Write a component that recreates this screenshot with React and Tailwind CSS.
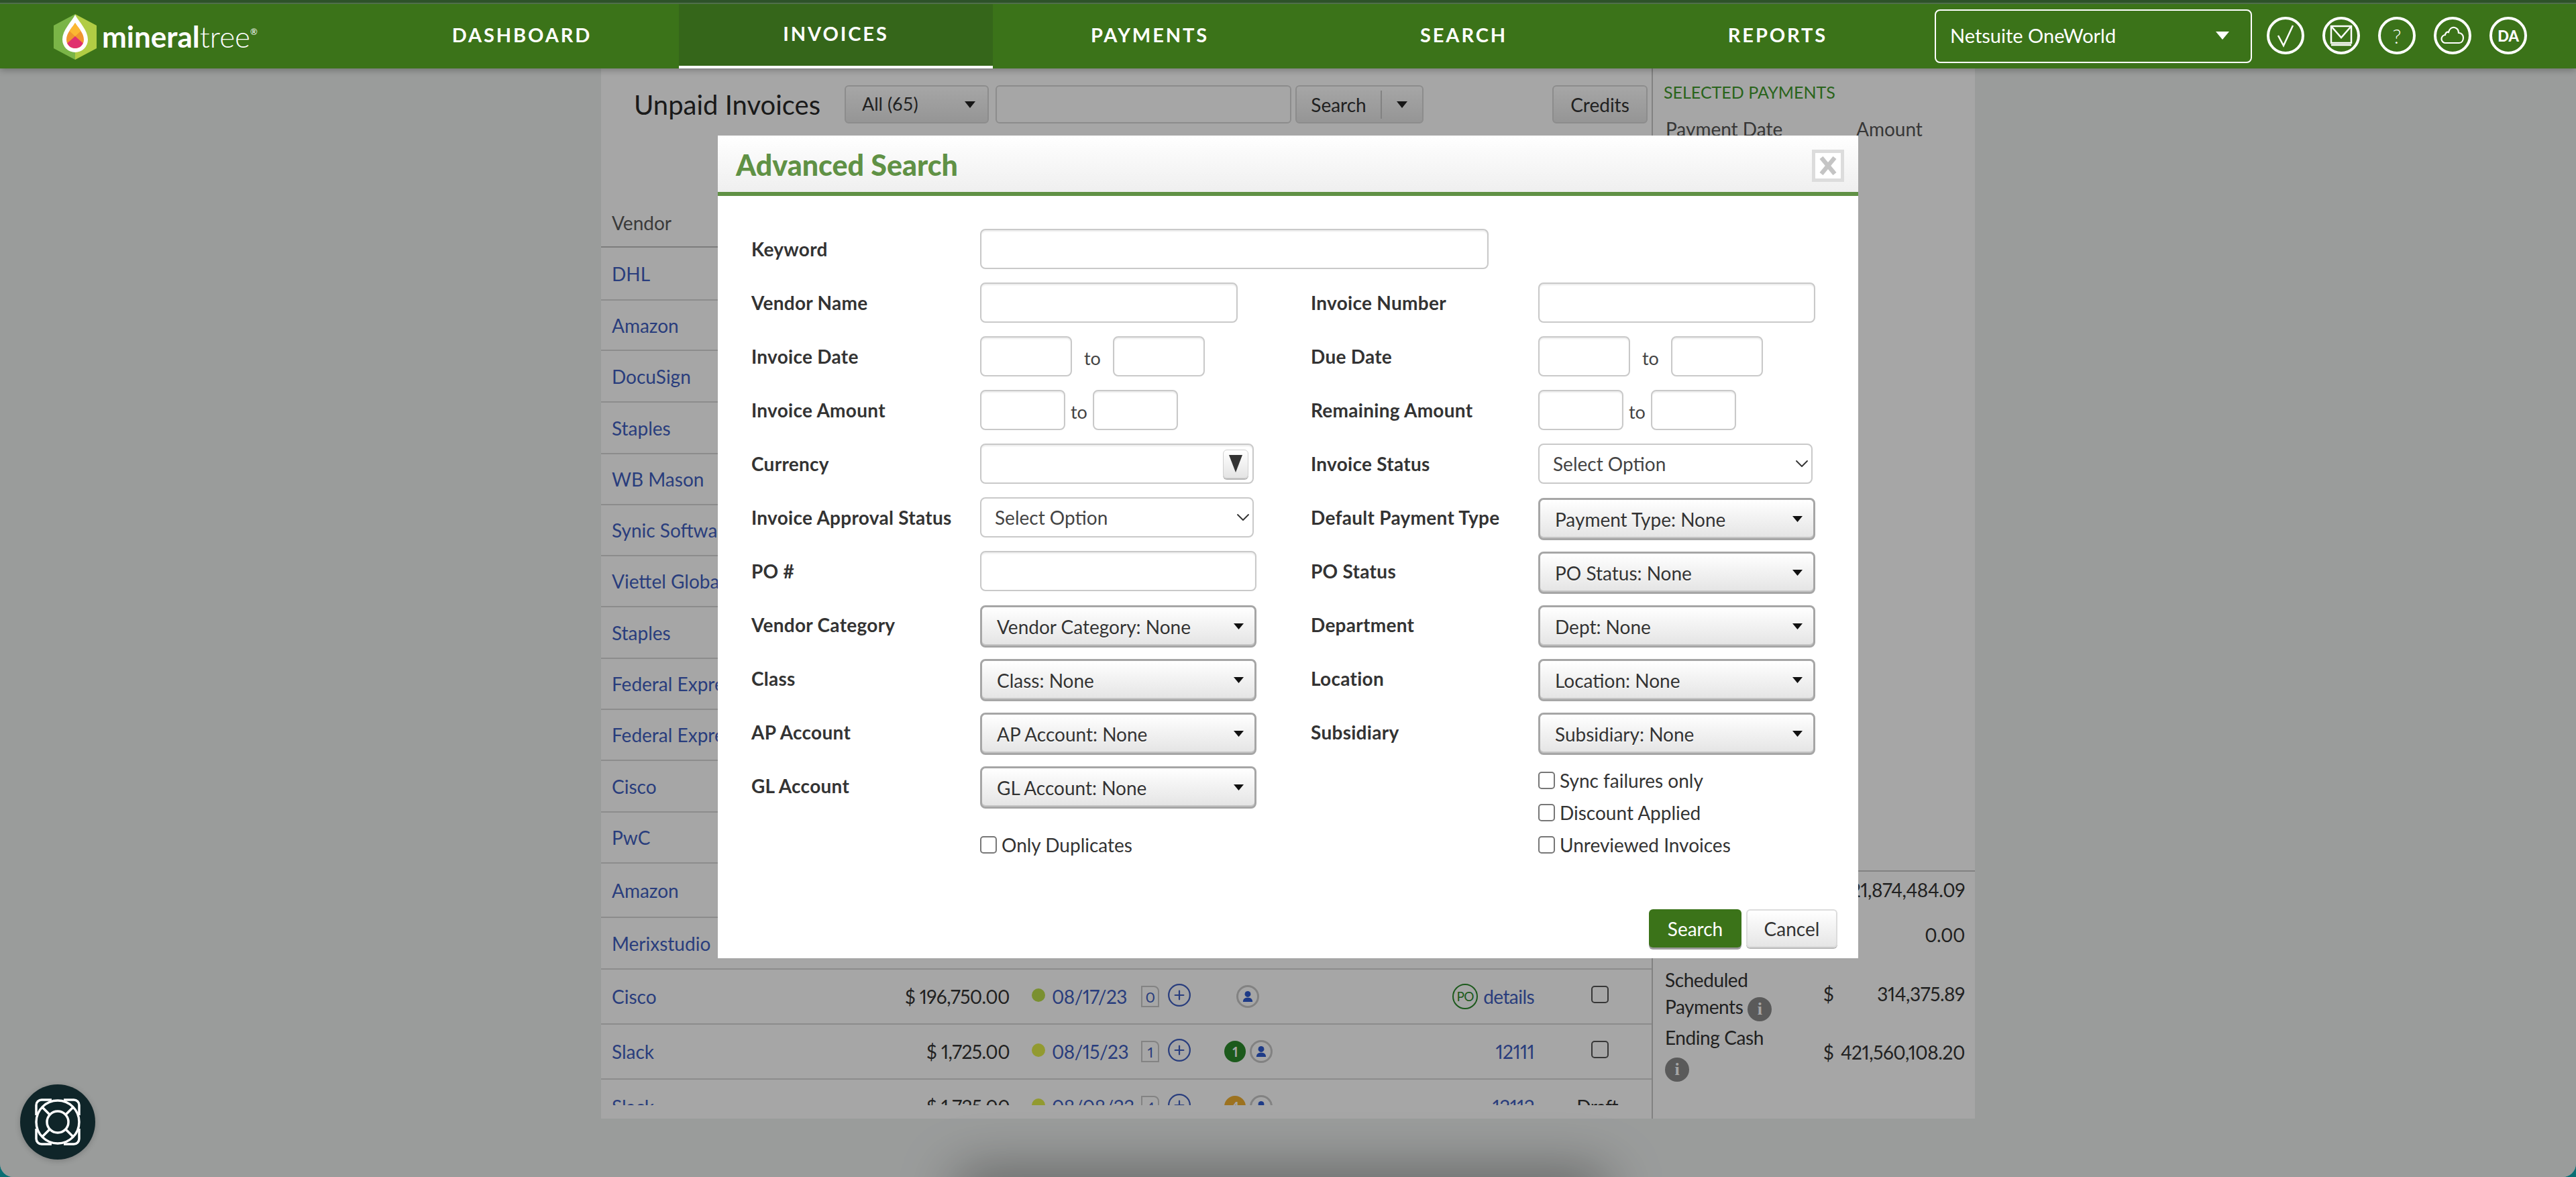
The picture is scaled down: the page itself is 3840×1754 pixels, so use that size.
import React from "react";
import { ChevronDown, CirclePlus } from "lucide-react";

const font = { fontFamily: '"Lato", "Open Sans", Arial, sans-serif' };

const vendors = [
  ["DHL", "h-[77px]"],
  ["Amazon", "h-[75px]"],
  ["DocuSign", "h-[77px]"],
  ["Staples", "h-[77px]"],
  ["WB Mason", "h-[76px]"],
  ["Synic Software", "h-[76px]"],
  ["Viettel Global", "h-[76px]"],
  ["Staples", "h-[77px]"],
  ["Federal Express", "h-[76px]"],
  ["Federal Express", "h-[76px]"],
  ["Cisco", "h-[77px]"],
  ["PwC", "h-[76px]"],
  ["Amazon", "h-[81px]"],
  ["Merixstudio", "h-[77px]"],
];

const detailRows = [
  { vendor: "Cisco", amount: "$ 196,750.00", dot: "bg-[#bcde4a]", date: "08/17/23", docs: 0, ref: "details", po: true, status: "check" },
  { vendor: "Slack", amount: "$ 1,725.00", dot: "bg-[#e1ed4a]", date: "08/15/23", docs: 1, badge: "1", badgeColor: "bg-[#2c8a2c]", ref: "12111", status: "check" },
  { vendor: "Slack", amount: "$ 1,725.00", dot: "bg-[#e1ed4a]", date: "08/08/23", docs: 4, badge: "4", badgeColor: "bg-[#f0b030]", ref: "12112", status: "Draft" },
];

function Logo() {
  return (
    <div className="flex items-center pl-[80px]">
      <svg width="64" height="68" viewBox="0 0 64 68" className="mt-[1px] shrink-0">
        <polygon points="32,0 0,17 0,51 32,68" fill="#7ab547" />
        <polygon points="32,0 64,17 64,51 32,68" fill="#b1cc44" />
        <path d="M32 1C38 12 51 24 51 38A19 19 0 0 1 13 38C13 24 26 12 32 1Z" fill="#fff" />
        <clipPath id="flame">
          <path d="M32 13C36 20 45 28 45 38A13 13 0 0 1 19 38C19 28 28 20 32 13Z" />
        </clipPath>
        <g clipPath="url(#flame)">
          <rect x="15" y="10" width="34" height="45" fill="#f0952f" />
          <polygon points="32,33 18,20 32,8 46,20" fill="#fbb832" />
          <polygon points="32,33 16,47 16,55 48,55 48,47" fill="#e0306e" />
        </g>
      </svg>
      <div className="ml-[8px] flex items-start text-white leading-none text-[44px]">
        <span className="font-bold">mineral</span>
        <span className="font-light">tree</span>
        <span className="text-[13px] mt-[9px]">®</span>
      </div>
    </div>
  );
}

function NavTab({ label, active }) {
  return (
    <div
      className={`flex-1 flex items-center justify-center pb-[4px] text-white font-bold text-[29px] tracking-[0.1em] ${
        active ? "bg-[#35661a] border-b-4 border-white" : ""
      }`}
    >
      {label}
    </div>
  );
}

function RoundIcon({ children }) {
  return (
    <div className="w-[56px] h-[56px] rounded-full border-[4px] border-white flex items-center justify-center text-white">
      {children}
    </div>
  );
}

function NavBar() {
  return (
    <div className="relative z-30 shadow-[0_2px_10px_rgba(0,0,0,0.3)]">
      <div className="h-[6px] bg-[#2d5229] border-b-2 border-[#4f6f4a]" />
      <div className="h-[96px] bg-[#3b7319] flex">
        <div className="w-[544px]">
          <div className="h-full flex items-center">
            <Logo />
          </div>
        </div>
        <div className="w-[2340px] flex">
          <NavTab label="DASHBOARD" />
          <NavTab label="INVOICES" active />
          <NavTab label="PAYMENTS" />
          <NavTab label="SEARCH" />
          <NavTab label="REPORTS" />
        </div>
        <div className="flex items-start pt-[8px]">
          <div className="w-[473px] h-[80px] border-2 border-white rounded-lg flex items-center justify-between pl-[21px] pr-[32px] pb-[2px] text-white text-[29px]">
            <span>Netsuite OneWorld</span>
            <svg width="20" height="12" viewBox="0 0 20 12">
              <polygon points="0,0 20,0 10,12" fill="#fff" />
            </svg>
          </div>
          <div className="flex gap-[27px] ml-[22px] mt-[11px]">
            <RoundIcon>
              <svg width="32" height="36" viewBox="0 0 32 36" fill="none" stroke="#fff" strokeWidth="2.5">
                <path d="M5 18l8 15L27 3" />
              </svg>
            </RoundIcon>
            <RoundIcon>
              <svg width="34" height="32" viewBox="0 0 34 32" fill="none" stroke="#fff" strokeWidth="2.5">
                <rect x="2" y="2" width="30" height="25" />
                <path d="M2 2l15 17L32 2M2 30h30" />
              </svg>
            </RoundIcon>
            <RoundIcon>
              <span className="text-[30px] font-light">?</span>
            </RoundIcon>
            <RoundIcon>
              <svg width="36" height="30" viewBox="0 0 36 30" fill="none" stroke="#fff" strokeWidth="2.2">
                <path d="M8 26a6 6 0 0 1-1-12c0-3 3-5 5-4 1-5 5-8 9-7 4 1 6 4 6 8 4 0 7 3 7 7s-2 8-6 8z" />
              </svg>
            </RoundIcon>
            <RoundIcon>
              <span className="text-[22px] font-black">DA</span>
            </RoundIcon>
          </div>
        </div>
      </div>
    </div>
  );
}

function UserIcon() {
  return (
    <div className="w-[34px] h-[34px] rounded-full border-[3px] border-[#c8c8c8] flex items-center justify-center shrink-0">
      <svg width="16" height="18" viewBox="0 0 18 20" fill="#2f5bd0">
        <circle cx="9" cy="6" r="5" />
        <path d="M1 19c0-5 3-7 8-7s8 2 8 7z" />
      </svg>
    </div>
  );
}

function DetailRow({ row }) {
  return (
    <div className="h-[82px] border-t-2 border-[#d8d8d8] flex items-center text-[28px] proportional-nums tracking-[-0.02em]">
      <div className="w-[400px] pl-[16px] text-[#3f5fc0] shrink-0 tracking-normal">{row.vendor}</div>
      <div className="w-[209px] text-right text-[#333] shrink-0">{row.amount}</div>
      <div className="w-[196px] pl-[33px] flex items-center gap-[10px] text-[#3f5fc0] shrink-0">
        <span className={`w-[20px] h-[20px] rounded-full shrink-0 mb-[4px] ${row.dot}`} />
        {row.date}
      </div>
      <div className="w-[41px] shrink-0">
        <div className="w-[27px] h-[32px] border-2 border-[#c9c9c9] flex items-center justify-center text-[#3f5fc0] text-[22px] rounded-tr-lg">
          {row.docs}
        </div>
      </div>
      <CirclePlus strokeWidth={1.4} className="text-[#3f5fc0] w-[38px] h-[38px] mb-1 -ml-[3px] -mr-[3px] shrink-0" />
      <div className={`w-[123px] flex items-center gap-[6px] shrink-0 ${row.badge ? "pl-[51px]" : "pl-[69px]"}`}>
        {row.badge && (
          <span className={`w-[32px] h-[32px] rounded-full shrink-0 flex items-center justify-center text-white text-[20px] font-bold ${row.badgeColor}`}>
            {row.badge}
          </span>
        )}
        <UserIcon />
      </div>
      <div className="w-[390px] flex items-center justify-end gap-[8px] text-[#3f5fc0] shrink-0">
        {row.po && (
          <span className="w-[38px] h-[38px] rounded-full border-2 border-[#2c8a2c] text-[#2c8a2c] text-[19px] flex items-center justify-center">
            PO
          </span>
        )}
        {row.ref}
      </div>
      <div className="w-[111px] flex justify-end shrink-0">
        {row.status === "check" ? (
          <span className="w-[26px] h-[26px] border-2 border-[#555] rounded-[5px] mb-[6px]" />
        ) : (
          <span className="text-[#333] -mr-[14px]">{row.status}</span>
        )}
      </div>
    </div>
  );
}

function InfoDot() {
  return (
    <span className="inline-flex w-[36px] h-[36px] rounded-full bg-[#8a8a8a] text-white text-[26px] font-bold items-center justify-center align-middle" style={{ fontFamily: '"Liberation Serif", serif' }}>
      i
    </span>
  );
}

function UnpaidInvoices() {
  return (
    <div className="absolute inset-x-0 top-[102px] bottom-0 bg-[#edf0ef]">
      <div className="w-[2048px] h-[1565px] ml-[896px] bg-white flex">
        <div className="w-[1568px] border-r-2 border-[#c8c8c8] flex flex-col">
          <div className="flex items-center h-[57px] mt-[25px] ml-[49px] shrink-0">
            <h1 className="text-[40px] text-[#282828] w-[314px]">Unpaid Invoices</h1>
            <div className="w-[215px] h-[57px] rounded-md border-2 border-[#d8d8d8] bg-linear-to-b from-white to-[#e6e6e6] flex items-center justify-between pl-[24px] pr-[18px] text-[27px] text-[#333]">
              All (65)
              <svg width="16" height="10" viewBox="0 0 16 10"><polygon points="0,0 16,0 8,10" fill="#222" /></svg>
            </div>
            <div className="w-[441px] h-[57px] ml-[10px] rounded-md border-2 border-[#d8d8d8] bg-white" />
            <div className="ml-[6px] w-[191px] h-[57px] rounded-md border-2 border-[#d8d8d8] bg-linear-to-b from-white to-[#e6e6e6] flex items-center text-[28px] text-[#333]">
              <span className="w-[127px] text-center border-r-2 border-[#c8c8c8]">Search</span>
              <svg width="16" height="10" viewBox="0 0 16 10" className="ml-[22px]"><polygon points="0,0 16,0 8,10" fill="#222" /></svg>
            </div>
            <div className="ml-[192px] w-[142px] h-[57px] rounded-md border-2 border-[#d8d8d8] bg-linear-to-b from-white to-[#e6e6e6] flex items-center justify-center text-[28px] text-[#333]">
              Credits
            </div>
          </div>
          <div className="h-[185px] flex items-end pb-[14px] pl-[16px] text-[28px] text-[#5a5a5a] border-b-2 border-[#c0c0c0] shrink-0">
            Vendor
          </div>
          <div className="flex-1 overflow-hidden mb-[20px]">
            {vendors.map(([name, height], i) => (
              <div key={i} className={`${height} border-t-2 first:border-t-0 border-[#d8d8d8] flex items-center pl-[16px] text-[28px] text-[#3f5fc0]`}>
                {name}
              </div>
            ))}
            {detailRows.map((row, i) => (
              <DetailRow key={i} row={row} />
            ))}
          </div>
        </div>
        <div className="flex-1 flex flex-col">
          <div className="pt-[17px] pl-[16px] text-[25px] text-[#3f9a2c]">SELECTED PAYMENTS</div>
          <div className="flex pl-[19px] pt-[14px] text-[28px] text-[#555]">
            <span className="w-[284px]">Payment Date</span>
            <span>Amount</span>
          </div>
          <div className="mt-auto h-[370px] border-t-2 border-[#c8c8c8] text-[28px] text-[#333] proportional-nums tracking-[-0.015em]">
            <div className="h-[54px] flex items-center justify-end pr-[15px]">$ 421,874,484.09</div>
            <div className="h-[80px] flex items-center justify-end pr-[15px]">0.00</div>
            <div className="h-[96px] flex items-center justify-between pl-[18px] pr-[15px]">
              <div className="leading-[40px] w-[230px]">
                Scheduled
                <br />
                Payments <InfoDot />
              </div>
              <div className="flex justify-between w-[211px]">
                <span>$</span>
                <span>314,375.89</span>
              </div>
            </div>
            <div className="h-[78px] flex items-center justify-between pl-[18px] pr-[15px]">
              <div className="leading-[44px] w-[230px]">
                Ending Cash
                <br />
                <InfoDot />
              </div>
              <div className="flex justify-between w-[211px]">
                <span>$</span>
                <span>421,560,108.20</span>
              </div>
            </div>
          </div>
        </div>
      </div>
      <div className="absolute left-[1420px] bottom-[-56px] w-[980px] h-[64px] rounded-full bg-black/40 blur-2xl" />
    </div>
  );
}

const inputCls = "h-[60px] rounded-lg border-2 border-[#c9c9c9] bg-white shadow-[inset_0_2px_2px_rgba(0,0,0,0.08)] shrink-0";

function Label({ children }) {
  return <label className="text-[28px] font-bold tracking-[0.01em] text-[#333]">{children}</label>;
}

function Range({ width, gapClass, toClass }) {
  return (
    <div className="flex items-center">
      <input className={`${inputCls} ${width}`} />
      <span className={`text-[27px] text-[#444] mt-[6px] ${gapClass} ${toClass}`}>to</span>
      <input className={`${inputCls} ${width}`} />
    </div>
  );
}

function Dropdown({ label, width = "w-[412px]" }) {
  return (
    <button className={`${width} h-[63px] mt-[5px] rounded-lg border-[3px] border-[#a6a6a6] bg-linear-to-b from-white to-[#e4e4e4] shadow-[inset_0_-2px_0_#c4c4c4] flex items-center justify-between pl-[22px] pr-[16px] text-[28px] text-[#333] [text-shadow:0_1px_0_#fff]`}>
      <span>{label}</span>
      <svg width="15" height="9" viewBox="0 0 15 9" className="shrink-0">
        <polygon points="0,0 15,0 7.5,9" fill="#111" />
      </svg>
    </button>
  );
}

function NativeSelect({ width }) {
  return (
    <div className={`relative ${width}`}>
      <select className="w-full h-[60px] appearance-none rounded-lg border-2 border-[#c9c9c9] bg-white pl-[20px] text-[28px] text-[#444]">
        <option>Select Option</option>
      </select>
      <ChevronDown size={32} strokeWidth={1.4} className="absolute right-0 top-[14px] text-[#333] pointer-events-none" />
    </div>
  );
}

function Check({ label }) {
  return (
    <label className="flex items-center h-[26px] text-[28px] text-[#333]">
      <input type="checkbox" className="appearance-none w-[25px] h-[26px] border-2 border-[#777] rounded-[5px] bg-white shrink-0" />
      <span className="ml-[7px]">{label}</span>
    </label>
  );
}

function AdvancedSearch() {
  return (
    <div className="absolute z-40 left-[1070px] top-[202px] w-[1700px] h-[1226px] bg-white flex flex-col">
      <div className="h-[90px] shrink-0 bg-linear-to-b from-white to-[#efefef] border-b-[6px] border-[#609145] flex items-start justify-between pl-[27px] pr-[21px]">
        <h2 className="text-[43px] font-black text-[#609145] leading-none mt-[22px]">Advanced Search</h2>
        <button className="w-[48px] h-[48px] mt-[21px] border-[5px] border-[#dcdcdc] bg-white flex items-center justify-center">
          <svg width="26" height="28" viewBox="0 0 26 28" stroke="#c4c4c4" strokeWidth="6.5">
            <path d="M3 2l20 24M23 2L3 26" />
          </svg>
        </button>
      </div>
      <div className="pl-[50px] pt-[39px] grid grid-cols-[341px_493px_339px_1fr] auto-rows-[80px] items-center">
        <Label>Keyword</Label>
        <input className={`${inputCls} w-[758px] col-span-3`} />

        <Label>Vendor Name</Label>
        <input className={`${inputCls} w-[384px]`} />
        <Label>Invoice Number</Label>
        <input className={`${inputCls} w-[413px]`} />

        <Label>Invoice Date</Label>
        <Range width="w-[137px]" gapClass="ml-[18px]" toClass="mr-[18px]" />
        <Label>Due Date</Label>
        <Range width="w-[137px]" gapClass="ml-[18px]" toClass="mr-[18px]" />

        <Label>Invoice Amount</Label>
        <Range width="w-[127px]" gapClass="ml-[8px]" toClass="mr-[8px]" />
        <Label>Remaining Amount</Label>
        <Range width="w-[127px]" gapClass="ml-[8px]" toClass="mr-[8px]" />

        <Label>Currency</Label>
        <div className={`${inputCls} w-[408px] flex items-center justify-end pr-[6px]`}>
          <span className="w-[38px] h-[43px] rounded-md border border-[#d0d0d0] bg-linear-to-b from-white to-[#e4e4e4] shadow-[0_2px_0_#b8b8b8] flex items-center justify-center">
            <svg width="20" height="26" viewBox="0 0 20 26"><polygon points="0,0 20,0 10,26" fill="#333" /></svg>
          </span>
        </div>
        <Label>Invoice Status</Label>
        <NativeSelect width="w-[409px]" />

        <Label>Invoice Approval Status</Label>
        <NativeSelect width="w-[408px]" />
        <Label>Default Payment Type</Label>
        <Dropdown label="Payment Type: None" width="w-[413px]" />

        <Label>PO #</Label>
        <input className={`${inputCls} w-[412px]`} />
        <Label>PO Status</Label>
        <Dropdown label="PO Status: None" width="w-[413px]" />

        <Label>Vendor Category</Label>
        <Dropdown label="Vendor Category: None" />
        <Label>Department</Label>
        <Dropdown label="Dept: None" width="w-[413px]" />

        <Label>Class</Label>
        <Dropdown label="Class: None" />
        <Label>Location</Label>
        <Dropdown label="Location: None" width="w-[413px]" />

        <Label>AP Account</Label>
        <Dropdown label="AP Account: None" />
        <Label>Subsidiary</Label>
        <Dropdown label="Subsidiary: None" width="w-[413px]" />

        <Label>GL Account</Label>
        <Dropdown label="GL Account: None" />
        <div className="col-start-4 row-span-2 self-start pt-[19px] flex flex-col gap-[22px]">
          <Check label="Sync failures only" />
          <Check label="Discount Applied" />
          <Check label="Unreviewed Invoices" />
        </div>
        <div className="col-start-2 self-start pt-[35px]">
          <Check label="Only Duplicates" />
        </div>
      </div>
      <div className="mt-auto flex justify-end gap-[7px] pr-[31px] pb-[16px]">
        <button className="w-[138px] h-[57px] rounded-md bg-[#3b7319] text-white text-[28px] shadow-[0_3px_0_#9a9a9a]">Search</button>
        <button className="w-[136px] h-[57px] rounded-md border-2 border-[#dcdcdc] bg-linear-to-b from-white to-[#e6e6e6] text-[#333] text-[28px] shadow-[0_2px_0_#b8b8b8]">Cancel</button>
      </div>
    </div>
  );
}

function HelpButton() {
  return (
    <button className="absolute z-40 left-[30px] top-[1616px] w-[112px] h-[112px] rounded-full bg-[#0f2529] flex items-center justify-center shadow-[0_2px_8px_rgba(0,0,0,0.2)]">
      <svg width="72" height="70" viewBox="0 0 72 70" fill="none" stroke="#fff" strokeWidth="3.5" strokeLinejoin="round">
        <circle cx="36" cy="35" r="32" />
        <circle cx="36" cy="35" r="16" />
        <path d="M13 13L24 24M59 13L48 24M13 57L24 46M59 57L48 46" />
        <path d="M4 25V10a8 8 0 0 1 8-8h15M45 2h15a8 8 0 0 1 8 8v15M68 45v15a8 8 0 0 1-8 8H45M27 68H12a8 8 0 0 1-8-8V45" />
      </svg>
    </button>
  );
}

export default function App() {
  return (
    <div className="w-[3840px] h-[1754px] bg-[#0a6f74]" style={font}>
      <div className="relative w-full h-full overflow-hidden rounded-b-[20px]">
        <NavBar />
        <UnpaidInvoices />
        {/* dim layer behind the modal */}
        <div className="absolute inset-x-0 top-[102px] bottom-0 z-20 bg-black/35" />
        <AdvancedSearch />
        <HelpButton />
      </div>
    </div>
  );
}
